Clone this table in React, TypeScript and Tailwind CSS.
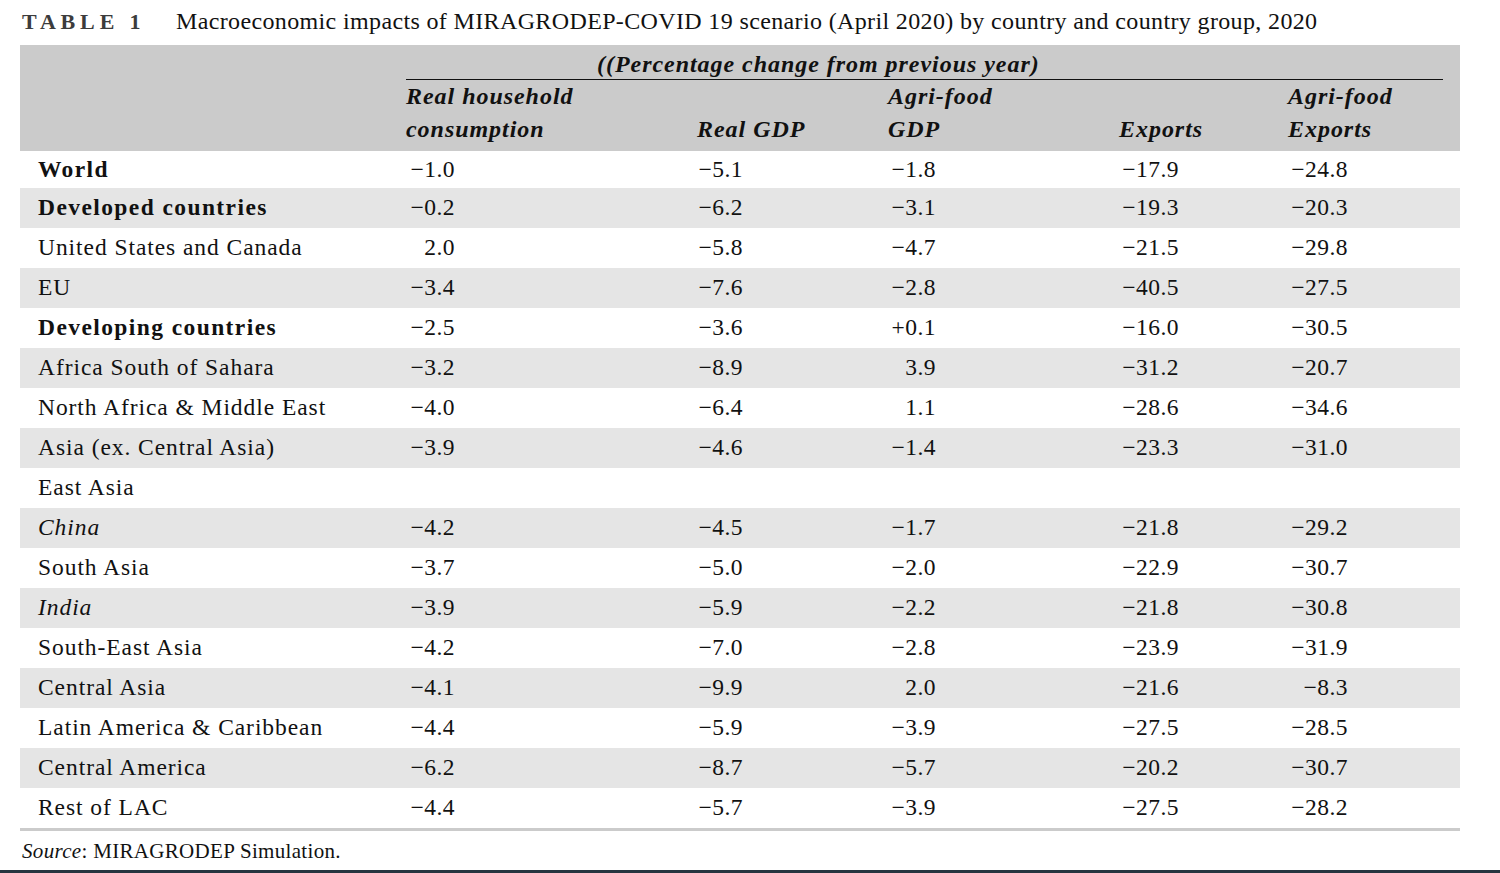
import React from "react";

type Row = { label: string; style?: "bold" | "italic"; v: string[] };

const rows: Row[] = [
  { label: "World", style: "bold", v: ["−1.0", "−5.1", "−1.8", "−17.9", "−24.8"] },
  { label: "Developed countries", style: "bold", v: ["−0.2", "−6.2", "−3.1", "−19.3", "−20.3"] },
  { label: "United States and Canada", v: ["2.0", "−5.8", "−4.7", "−21.5", "−29.8"] },
  { label: "EU", v: ["−3.4", "−7.6", "−2.8", "−40.5", "−27.5"] },
  { label: "Developing countries", style: "bold", v: ["−2.5", "−3.6", "+0.1", "−16.0", "−30.5"] },
  { label: "Africa South of Sahara", v: ["−3.2", "−8.9", "3.9", "−31.2", "−20.7"] },
  { label: "North Africa & Middle East", v: ["−4.0", "−6.4", "1.1", "−28.6", "−34.6"] },
  { label: "Asia (ex. Central Asia)", v: ["−3.9", "−4.6", "−1.4", "−23.3", "−31.0"] },
  { label: "East Asia", v: ["", "", "", "", ""] },
  { label: "China", style: "italic", v: ["−4.2", "−4.5", "−1.7", "−21.8", "−29.2"] },
  { label: "South Asia", v: ["−3.7", "−5.0", "−2.0", "−22.9", "−30.7"] },
  { label: "India", style: "italic", v: ["−3.9", "−5.9", "−2.2", "−21.8", "−30.8"] },
  { label: "South-East Asia", v: ["−4.2", "−7.0", "−2.8", "−23.9", "−31.9"] },
  { label: "Central Asia", v: ["−4.1", "−9.9", "2.0", "−21.6", "−8.3"] },
  { label: "Latin America & Caribbean", v: ["−4.4", "−5.9", "−3.9", "−27.5", "−28.5"] },
  { label: "Central America", v: ["−6.2", "−8.7", "−5.7", "−20.2", "−30.7"] },
  { label: "Rest of LAC", v: ["−4.4", "−5.7", "−3.9", "−27.5", "−28.2"] },
];

const numW = ["w-[49px]", "w-[46px]", "w-[48px]", "w-[60px]", "w-[60px]"];
const grid = "grid grid-cols-[386px_291px_191px_231px_169px_172px]";

export default function App() {
  return (
    <div
      className="h-[873px] w-[1500px] flex flex-col bg-white text-[#111]"
      style={{ fontFamily: '"Liberation Serif", serif' }}
    >
      {/* Title */}
      <div className="flex items-center h-[30px] mt-[6px] mb-[9px] pl-[22px]">
        <span className="w-[154px] text-[22px] font-bold tracking-[0.22em] text-[#3c3c3c]">TABLE 1</span>
        <span className="text-[24px] leading-[30px] tracking-[0.015em]">
          Macroeconomic impacts of MIRAGRODEP-COVID 19 scenario (April 2020) by country and country group, 2020
        </span>
      </div>

      {/* Table */}
      <div className="ml-[20px] w-[1440px]">
        {/* Header */}
        <div className="bg-[#cbcbcb] pt-[4px] pb-[5px] font-bold italic text-[24px] tracking-[0.04em]">
          <div className="h-[30px] leading-[30px] pl-[577px]">((Percentage change from previous year)</div>
          <div className="ml-[386px] mr-[17px] h-px bg-[#111]" />
          <div className={grid + " leading-[33px]"}>
            <div />
            <div>
              <div className="h-[33px]">Real household</div>
              <div className="h-[33px]">consumption</div>
            </div>
            <div>
              <div className="h-[33px]" />
              <div className="h-[33px]">Real GDP</div>
            </div>
            <div>
              <div className="h-[33px]">Agri-food</div>
              <div className="h-[33px]">GDP</div>
            </div>
            <div>
              <div className="h-[33px]" />
              <div className="h-[33px]">Exports</div>
            </div>
            <div>
              <div className="h-[33px]">Agri-food</div>
              <div className="h-[33px]">Exports</div>
            </div>
          </div>
        </div>

        {/* Body */}
        <div className="text-[23.5px]">
          {rows.map((r, i) => (
            <div
              key={r.label}
              className={
                grid +
                " items-center " +
                (i === 0 ? "h-[37px] " : "h-[40px] ") +
                (i % 2 === 1 ? "bg-[#e5e5e5]" : "bg-white")
              }
            >
              <div
                className={
                  "pl-[18px] " +
                  (r.style === "bold"
                    ? "font-bold tracking-[0.06em]"
                    : r.style === "italic"
                    ? "italic tracking-[0.04em]"
                    : "tracking-[0.04em]")
                }
              >
                {r.label}
              </div>
              {r.v.map((n, j) => (
                <div key={j}>
                  <div className={numW[j] + " text-right tracking-[0.02em]"}>{n}</div>
                </div>
              ))}
            </div>
          ))}
        </div>
        <div className="h-[3px] bg-[#cbcbcb]" />
      </div>

      {/* Source */}
      <div className="pl-[22px] mt-[8px] text-[21px] leading-[24px] tracking-[0.015em]">
        <span className="italic">Source</span>: MIRAGRODEP Simulation.
      </div>

      <div className="mt-auto h-[3px] w-full bg-[#263540]" />
    </div>
  );
}
